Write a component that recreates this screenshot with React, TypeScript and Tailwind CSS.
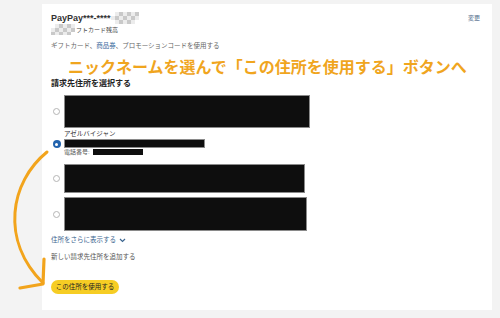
const jp = "font-['Liberation_Sans','Noto_Sans_CJK_JP',sans-serif]";

const Checker = ({ w, h, cells }: { w: number; h: number; cells: [number, number][] }) => (
  <svg width={w} height={h} viewBox={`0 0 ${w} ${h}`} className="shrink-0">
    <defs>
      <filter id="soft" x="-10%" y="-10%" width="120%" height="120%">
        <feGaussianBlur stdDeviation="0.6" />
      </filter>
    </defs>
    <g filter="url(#soft)">
      {cells.map(([x, y], i) => (
        <rect key={i} x={x * 4} y={y * 4} width={4} height={4} fill={(x + y) % 2 === 0 ? "#c9c9c9" : "#ececec"} />
      ))}
    </g>
  </svg>
);

const grid = (cols: number, rows: number, skip: string[] = []) => {
  const out: [number, number][] = [];
  for (let y = 0; y < rows; y++)
    for (let x = 0; x < cols; x++) if (!skip.includes(`${x},${y}`)) out.push([x, y]);
  return out;
};

const Radio = ({ checked }: { checked?: boolean }) =>
  checked ? (
    <span className="flex h-[8px] w-[8px] items-center justify-center rounded-full bg-[#2263ad]">
      <span className="h-[3px] w-[3px] rounded-full bg-white" />
    </span>
  ) : (
    <span className="h-[7px] w-[7px] rounded-full border border-[#b5b5b5] bg-white" />
  );

const Redacted = ({ className }: { className: string }) => (
  <div className={`border border-[#8a8a8a] bg-[#0e0e0e] ${className}`} />
);

export default function App() {
  return (
    <div className={`relative h-[318px] w-[500px] overflow-hidden bg-[#f3f3f3] pl-[42px] pt-[4px] ${jp}`}>
      <div className="flex h-[306px] w-[450px] flex-col bg-white pl-[9px] pr-[12px] pt-[8px]">
        <div className="flex h-[12px] items-center justify-between">
          <div className="flex items-center">
            <span className="text-[9px] font-bold leading-none text-[#333]">PayPay***-****</span>
            <Checker w={28} h={12} cells={grid(7, 3, ["0,0", "0,2", "6,2"])} />
          </div>
          <span className="text-[6px] leading-none text-[#4f6a8a]">変更</span>
        </div>
        <div className="flex h-[11px] items-center">
          <Checker w={24} h={11} cells={grid(6, 3, ["0,0", "5,2"])} />
          <span className="ml-[1px] text-[6px] leading-none text-[#444]">フトカード残高</span>
        </div>
        <div className="mt-[7px] flex h-[9px] items-center text-[6.5px] leading-none text-[#666]">
          ギフトカード、<span className="text-[#3d6c9e]">商品券</span>、プロモーションコードを使用する
        </div>

        <div className="mt-[28px] flex h-[10px] items-center text-[8px] font-bold leading-none text-[#222]">
          請求先住所を選択する
        </div>

        <div className="mt-[6px] flex flex-col">
          <div className="flex items-center">
            <div className="flex w-[13px] justify-start pl-[2px]">
              <Radio />
            </div>
            <Redacted className="h-[33px] w-[246px]" />
          </div>

          <div className="mt-[2px] flex">
            <div className="flex w-[13px] flex-col pl-[1.5px] pt-[10px]">
              <Radio checked />
            </div>
            <div className="flex flex-col">
              <div className="flex h-[8px] items-center text-[6.5px] leading-none text-[#333]">アゼルバイジャン</div>
              <Redacted className="mt-[1px] h-[9px] w-[141px]" />
              <div className="flex h-[8px] items-center text-[6px] leading-none text-[#555]">
                電話番号:
                <span className="ml-[3px] h-[6px] w-[50px] bg-[#0e0e0e]" />
              </div>
            </div>
          </div>

          <div className="mt-[8px] flex items-center">
            <div className="flex w-[13px] justify-start pl-[2px]">
              <Radio />
            </div>
            <Redacted className="h-[29px] w-[241px]" />
          </div>

          <div className="mt-[4px] flex items-center">
            <div className="flex w-[13px] justify-start pl-[2px]">
              <Radio />
            </div>
            <Redacted className="h-[34px] w-[243px]" />
          </div>
        </div>

        <div className="mt-[5px] flex h-[9px] items-center text-[6.5px] leading-none text-[#3c6690]">
          住所をさらに表示する
          <svg width="7" height="5" viewBox="0 0 7 5" className="ml-[3px]">
            <path d="M1 1 L3.5 3.5 L6 1" fill="none" stroke="#3c6690" strokeWidth="1.2" />
          </svg>
        </div>
        <div className="mt-[8px] flex h-[9px] items-center text-[6.5px] leading-none text-[#555]">
          新しい請求先住所を追加する
        </div>

        <button
          type="button"
          className="mt-[18px] flex h-[14px] w-[68px] items-center justify-center rounded-full bg-[#f6cd24] text-[6.5px] leading-none text-[#222]"
        >
          この住所を使用する
        </button>
      </div>

      <div className="absolute left-[68px] top-[57px] text-[16px] font-bold leading-[22px] tracking-[0px] text-[#f0a51e] [text-shadow:0_0_2px_#fff]">
        ニックネームを選んで「この住所を使用する」ボタンへ
      </div>

      <svg className="absolute left-0 top-0" width="500" height="318" viewBox="0 0 500 318">
        <path d="M47 152 C 10 182, 0 240, 43 283" fill="none" stroke="#f2a41c" strokeWidth="3" strokeLinecap="round" />
        <path d="M44 259 L43 284 L20 288" fill="none" stroke="#f2a41c" strokeWidth="3.2" strokeLinecap="round" strokeLinejoin="round" />
      </svg>
    </div>
  );
}
